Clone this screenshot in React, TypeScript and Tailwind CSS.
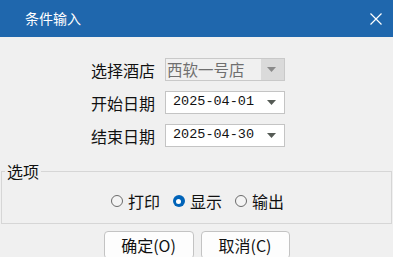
const cjk = "font-['Noto_Sans_CJK_SC',sans-serif]";

function Arrow({ muted }: { muted?: boolean }) {
  return (
    <svg width="9" height="5" viewBox="0 0 9 5" className="block">
      <path d="M0 0h9L4.5 5z" fill={muted ? "#8a8a8a" : "#555b55"} />
    </svg>
  );
}

type ComboProps = { value: string; disabled?: boolean; mono?: boolean };

function Combo({ value, disabled, mono }: ComboProps) {
  return (
    <div
      className={`flex h-[23px] w-[120px] items-stretch border ${
        disabled ? "border-[#c9c9c9] bg-[#f0f0f0]" : "border-[#c4c4c4] bg-white"
      }`}
    >
      <span
        className={`flex flex-1 items-center overflow-hidden whitespace-nowrap ${
          mono
            ? "pl-[7px] font-['Liberation_Mono',monospace] text-[13.5px] text-[#111]"
            : `pl-[1px] ${cjk} text-[15.5px] leading-none`
        } ${disabled ? "text-[#6f6f6f]" : ""}`}
      >
        {value}
      </span>
      <span
        className={`flex w-[23px] items-center justify-center ${
          disabled ? "bg-[#dadada]" : ""
        } pr-[2px]`}
      >
        <Arrow muted={disabled} />
      </span>
    </div>
  );
}

function Radio({ label, checked }: { label: string; checked?: boolean }) {
  return (
    <label className="flex items-center gap-[5px]">
      {checked ? (
        <span className="flex h-[12px] w-[12px] items-center justify-center rounded-full bg-[#0063b8]">
          <span className="h-[5px] w-[5px] rounded-full bg-white" />
        </span>
      ) : (
        <span className="h-[12px] w-[12px] rounded-full border border-[#6b6b6b] bg-[#f4f4f4]" />
      )}
      <span className="text-[16px] leading-[20px] text-[#111]">{label}</span>
    </label>
  );
}

const rows: { label: string; value: string; disabled?: boolean; mono?: boolean }[] = [
  { label: "选择酒店", value: "西软一号店", disabled: true },
  { label: "开始日期", value: "2025-04-01", mono: true },
  { label: "结束日期", value: "2025-04-30", mono: true },
];

export default function App() {
  return (
    <div className={`h-[257px] w-[393px] overflow-hidden bg-[#f0f0f0] ${cjk}`}>
      <div className="flex h-[37px] items-center justify-between bg-[#1f67ad] pl-[25px] pr-[11px] text-white">
        <span className="text-[14px]">条件输入</span>
        <svg width="12" height="12" viewBox="0 0 12 12">
          <path d="M0.5 0.5L11.5 11.5M11.5 0.5L0.5 11.5" stroke="white" strokeWidth="1.2" />
        </svg>
      </div>

      <div className="flex flex-col gap-[10px] pl-[91px] pt-[21px]">
        {rows.map((r) => (
          <div key={r.label} className="flex items-center">
            <span className="w-[74px] text-[16px] leading-none text-[#111]">{r.label}</span>
            <Combo value={r.value} disabled={r.disabled} mono={r.mono} />
          </div>
        ))}
      </div>

      <fieldset className="mx-[1px] mt-[14px] border border-[#d6d6d6] px-[3px] pb-[12px]">
        <legend className="px-[2px] text-[16px] leading-[20px] text-[#111]">选项</legend>
        <div className="mt-[10px] flex justify-center gap-[13px] pl-[2px]">
          <Radio label="打印" />
          <Radio label="显示" checked />
          <Radio label="输出" />
        </div>
      </fieldset>

      <div className="mt-[7px] flex justify-center gap-[7px]">
        <button className="h-[28px] w-[90px] rounded-[4px] border border-[#c3c3c3] bg-[#fdfdfd] text-[16px] text-[#111]">
          确定(O)
        </button>
        <button className="h-[28px] w-[89px] rounded-[4px] border border-[#c3c3c3] bg-[#fdfdfd] text-[16px] text-[#111]">
          取消(C)
        </button>
      </div>
    </div>
  );
}
